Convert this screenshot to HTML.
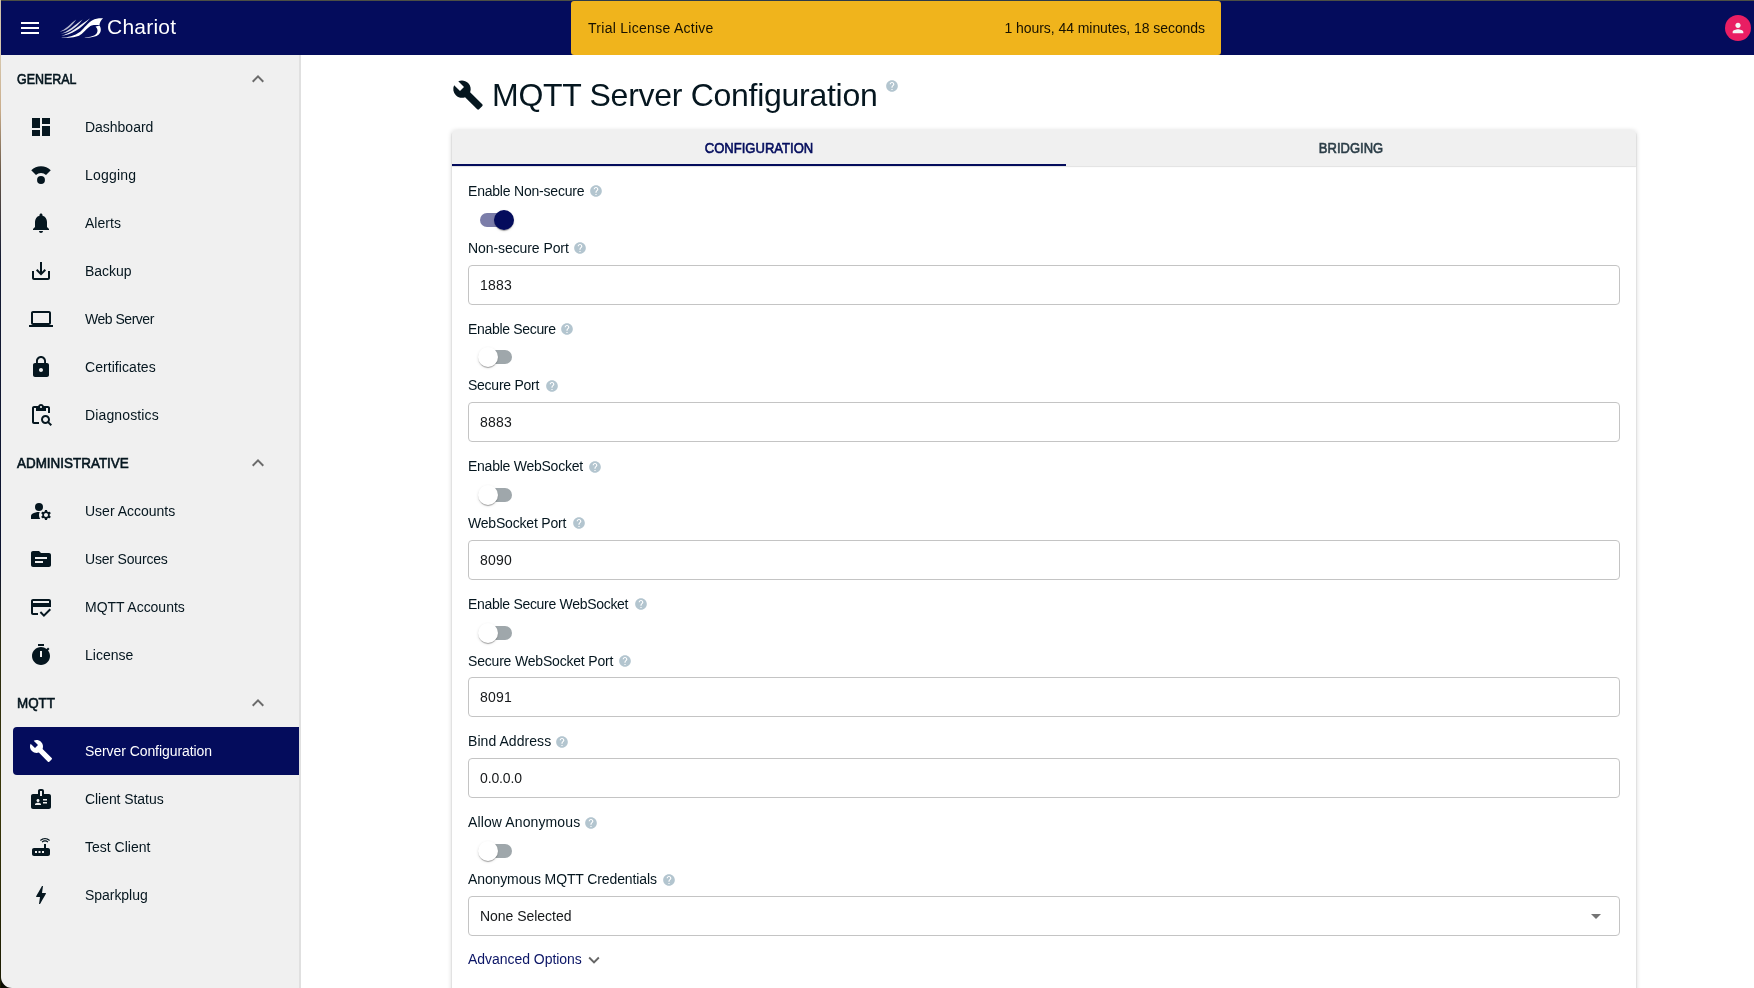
<!DOCTYPE html>
<html lang="en">
<head>
<meta charset="utf-8">
<title>Chariot - MQTT Server Configuration</title>
<style>
*{box-sizing:border-box;margin:0;padding:0}
html,body{width:1754px;height:988px;overflow:hidden;background:#fff}
body{font-family:"Liberation Sans",sans-serif;font-size:14px;color:#05161f;position:relative}
#app{position:absolute;left:0;top:0;width:1754px;height:988px;overflow:hidden;will-change:transform}
.abs{position:absolute}
svg{display:block}
/* window edges */
#topline{left:0;top:0;width:1754px;height:1px;background:linear-gradient(90deg,#4d4f44 0,#4d4f44 571px,#2d3b4b 574px,#2d3b4b 1218px,#4d4f44 1221px,#4d4f44 100%)}
#corner{left:0;top:974px;width:14px;height:14px;background:#0b0b03}
#leftline{left:0;top:0;width:1px;height:988px;background:linear-gradient(#cdbfa7 0,#d7c8ae 55px,#c9ad8b 110px,#6b5a49 170px,#141b33 260px,#0c1330 560px,#2a2a10 640px,#3a3708 800px,#1a1a02 988px)}
/* header */
#hdr{left:1px;top:1px;width:1753px;height:54px;background:#040c5c}
#banner{left:571px;top:1px;width:650px;height:54px;background:#f0b41c;border-radius:3px;color:#171100}
#brand{left:106px;top:12px;height:28px;line-height:28px;font-size:21px;color:#fff;white-space:nowrap;letter-spacing:.22px}
/* sidebar */
#side{left:1px;top:55px;width:300px;height:933px;background:#f0f0f0;border-right:2px solid #e0e0e0;border-bottom-left-radius:11px}
.row{position:absolute;left:0;width:298px;height:48px}
.row .t{position:absolute;left:84px;top:14px;height:20px;line-height:20px;white-space:nowrap;font-size:14px}
.row .i{position:absolute;left:28px;top:12px;width:24px;height:24px;fill:#05161f}
.sec .t{left:16px;font-size:14px;-webkit-text-stroke:.6px #05161f;transform-origin:0 50%}
.sec .c{position:absolute;left:245px;top:12px;width:24px;height:24px;fill:#6b6b6b}
.row.sel{left:12px;width:286px;background:#040c5c;border-radius:4px 0 0 4px;color:#fff}
.row.sel .t{left:72px}
.row.sel .i{left:16px;fill:#fff}
/* main */
#title{left:492px;top:75px;height:40px;line-height:40px;font-size:32px;white-space:nowrap;letter-spacing:-.28px}
#card{left:452px;top:130px;width:1184px;height:900px;background:#fff;border-radius:4px;box-shadow:0 3px 1px -2px rgba(0,0,0,.2),0 2px 2px 0 rgba(0,0,0,.14),0 1px 5px 0 rgba(0,0,0,.2)}
#tabs{left:0;top:0;width:1184px;height:36px;background:#f0f0f0;border-radius:4px 4px 0 0;box-shadow:0 1px 1px rgba(0,0,0,.12)}
.tab{position:absolute;top:0;height:36px;line-height:36px;text-align:center;font-size:14px;white-space:nowrap}
.lbl{position:absolute;left:16px;height:20px;line-height:20px;font-size:14px;white-space:nowrap}
.hp{position:absolute;width:14px;height:14px;fill:#b3c5cf}
.inp{position:absolute;left:16px;width:1152px;height:40px;border:1px solid #c4c4c4;border-radius:4px;background:#fff;padding-left:11px;line-height:38px;font-size:14px;color:#16181a;white-space:nowrap}
.sw{position:absolute;left:28px;width:32px;height:14px;border-radius:7px;background:#9fa7ab}
.sw i{position:absolute;left:-2px;top:-3px;width:20px;height:20px;border-radius:50%;background:#fff;box-shadow:0 2px 1px -1px rgba(0,0,0,.2),0 1px 1px 0 rgba(0,0,0,.14),0 1px 3px 0 rgba(0,0,0,.12)}
.sw.on{background:#7b7da9}
.sw.on i{left:14px;background:#040c5c}
</style>
</head>
<body>
<div id="app">
  <div id="corner" class="abs"></div>
  <div id="hdr" class="abs">
    <svg class="abs" style="left:17px;top:15px" width="24" height="24" viewBox="0 0 24 24" fill="#fff"><path d="M3 18h18v-2H3v2zm0-5h18v-2H3v2zm0-7v2h18V6H3z"/></svg>
    <svg class="abs" style="left:55px;top:13px" width="50" height="28" viewBox="0 0 1754 982" fill="#fff"><defs><filter id="lb" x="-10%" y="-10%" width="120%" height="120%"><feGaussianBlur stdDeviation="9"/></filter></defs>
      <path opacity=".95" filter="url(#lb)" d="M180 765C502 696 784 432 1200 150C856 528 538 744 180 765Z"/>
      <path opacity=".85" filter="url(#lb)" d="M150 692C413 628 646 395 930 190C714 485 447 672 150 692Z"/>
      <path opacity=".7" filter="url(#lb)" d="M125 622C324 559 488 358 710 195C552 442 356 601 125 622Z"/>
      <path d="M200 828C420 822 640 770 850 620C1000 500 1100 300 1350 185C1450 150 1560 150 1650 150C1580 220 1530 300 1525 392C1450 378 1330 378 1250 400C1130 440 1030 590 900 700C780 800 560 850 200 832Z"/>
      <path d="M1385 445C1440 425 1500 418 1535 415C1590 520 1590 640 1500 720C1400 810 1200 840 920 826C1150 815 1300 790 1390 720C1480 640 1480 520 1385 445Z"/>
    </svg>
    <div class="abs" id="brand">Chariot</div>
    <div id="banner" class="abs" style="left:570px;top:0">
      <span class="abs" style="left:17px;top:17px;line-height:20px;white-space:nowrap;letter-spacing:.28px">Trial License Active</span>
      <span class="abs" style="right:16px;top:17px;line-height:20px;white-space:nowrap;letter-spacing:-.06px">1 hours, 44 minutes, 18 seconds</span>
    </div>
    <div class="abs" style="left:1724px;top:14px;width:26px;height:26px;border-radius:50%;background:#e91e63">
      <svg class="abs" style="left:5px;top:5px" width="16" height="16" viewBox="0 0 24 24" fill="#f5f5f5"><path d="M12 12c2.210 0 4-1.790 4-4s-1.790-4-4-4-4 1.790-4 4 1.790 4 4 4zm0 2c-2.670 0-8 1.340-8 4v2h16v-2c0-2.660-5.330-4-8-4z"/></svg>
    </div>
  </div>
  <!--SIDE--><div id="side" class="abs">
    <div class="row sec" style="top:0px"><span class="t" style="transform:scaleX(0.889)">GENERAL</span><svg class="c" viewBox="0 0 24 24"><path d="M12 8l-6 6 1.410 1.410L12 10.830l4.590 4.580L18 14z"/></svg></div>
    <div class="row" style="top:48px"><svg class="i" viewBox="0 0 24 24"><path d="M3 13h8V3H3v10zm0 8h8v-6H3v6zm10 0h8V11h-8v10zm0-18v6h8V3h-8z"/></svg><span class="t" style="letter-spacing:-0.02px">Dashboard</span></div>
    <div class="row" style="top:96px"><svg class="i" viewBox="0 0 24 24"><circle cx="12" cy="16.95" r="3.95"/><path d="M2.240 7.240A13.800 13.800 0 0 1 21.760 7.240L17.020 11.980A7.100 7.100 0 0 0 6.980 11.980Z"/></svg><span class="t" style="letter-spacing:0.21px">Logging</span></div>
    <div class="row" style="top:144px"><svg class="i" viewBox="0 0 24 24"><path d="M12 22c1.100 0 2-.9 2-2h-4c0 1.100.89 2 2 2zm6-6v-5c0-3.070-1.640-5.640-4.500-6.320V4c0-.83-.67-1.500-1.500-1.500s-1.500.67-1.500 1.500v.68C7.630 5.360 6 7.920 6 11v5l-2 2v1h16v-1l-2-2z"/></svg><span class="t" style="letter-spacing:0.02px">Alerts</span></div>
    <div class="row" style="top:192px"><svg class="i" viewBox="0 0 24 24"><path d="M19 12v7H5v-7H3v7c0 1.100.9 2 2 2h14c1.100 0 2-.9 2-2v-7h-2zm-6 .67l2.590-2.580L17 11.500l-5 5-5-5 1.410-1.410L11 12.670V3h2z"/></svg><span class="t" style="letter-spacing:-0.02px">Backup</span></div>
    <div class="row" style="top:240px"><svg class="i" viewBox="0 0 24 24"><path d="M20 18c1.100 0 1.990-.9 1.990-2L22 6c0-1.100-.9-2-2-2H4c-1.100 0-2 .9-2 2v10c0 1.100.9 2 2 2H0v2h24v-2h-4zM4 6h16v10H4V6z"/></svg><span class="t" style="letter-spacing:-0.48px">Web Server</span></div>
    <div class="row" style="top:288px"><svg class="i" viewBox="0 0 24 24"><path d="M18 8h-1V6c0-2.760-2.240-5-5-5S7 3.240 7 6v2H6c-1.100 0-2 .9-2 2v10c0 1.100.9 2 2 2h12c1.100 0 2-.9 2-2V10c0-1.100-.9-2-2-2zm-6 9c-1.100 0-2-.9-2-2s.9-2 2-2 2 .9 2 2-.9 2-2 2zm3.100-9H8.900V6c0-1.710 1.390-3.100 3.100-3.100 1.710 0 3.100 1.390 3.100 3.100v2z"/></svg><span class="t" style="letter-spacing:0.06px">Certificates</span></div>
    <div class="row" style="top:336px"><svg class="i" viewBox="0 0 24 24"><path d="M5 5h2v3h10V5h2v5h2V5c0-1.100-.9-2-2-2h-4.180C14.400 1.840 13.300 1 12 1s-2.400.84-2.820 2H5c-1.100 0-2 .9-2 2v14c0 1.100.9 2 2 2h5v-2H5V5zm7-2c.55 0 1 .45 1 1s-.45 1-1 1-1-.45-1-1 .45-1 1-1z"/><path d="M20.300 18.900c.4-.7.7-1.500.7-2.400 0-2.500-2-4.500-4.500-4.500S12 14 12 16.500s2 4.500 4.500 4.500c.9 0 1.700-.3 2.400-.7l2.700 2.700 1.400-1.400-2.700-2.700zm-3.800.1c-1.400 0-2.500-1.100-2.500-2.500s1.100-2.500 2.500-2.500 2.500 1.100 2.500 2.500-1.100 2.500-2.500 2.500z"/></svg><span class="t" style="letter-spacing:0.13px">Diagnostics</span></div>
    <div class="row sec" style="top:384px"><span class="t" style="transform:scaleX(0.96)">ADMINISTRATIVE</span><svg class="c" viewBox="0 0 24 24"><path d="M12 8l-6 6 1.410 1.410L12 10.830l4.590 4.580L18 14z"/></svg></div>
    <div class="row" style="top:432px"><svg class="i" viewBox="0 0 24 24"><circle cx="10" cy="8" r="4"/><path d="M10.670 13.020c-.22-.01-.44-.02-.67-.02-2.420 0-4.680.67-6.610 1.820-.88.52-1.390 1.500-1.390 2.530V20h9.260c-.79-1.130-1.260-2.510-1.260-4 0-1.070.25-2.070.67-2.980zM20.750 16c0-.22-.03-.42-.06-.63l1.140-1.010-1-1.730-1.450.49c-.32-.27-.68-.48-1.080-.63L18 11h-2l-.3 1.490c-.4.15-.76.36-1.080.63l-1.450-.49-1 1.730 1.140 1.010c-.03.21-.06.41-.06.63s.03.420.06.630l-1.140 1.010 1 1.730 1.450-.49c.32.27.68.480 1.080.630L16 21h2l.3-1.490c.4-.15.76-.36 1.080-.63l1.450.49 1-1.730-1.140-1.010c.03-.21.06-.41.06-.63zM17 18c-1.100 0-2-.9-2-2s.9-2 2-2 2 .9 2 2-.9 2-2 2z"/></svg><span class="t" style="letter-spacing:0px">User Accounts</span></div>
    <div class="row" style="top:480px"><svg class="i" viewBox="0 0 24 24"><path d="M20 6h-8l-2-2H4c-1.100 0-1.990.9-1.990 2L2 18c0 1.100.9 2 2 2h16c1.100 0 2-.9 2-2V8c0-1.100-.9-2-2-2zm-6 10H6v-2h8v2zm4-4H6v-2h12v2z"/></svg><span class="t" style="letter-spacing:-0.18px">User Sources</span></div>
    <div class="row" style="top:528px"><svg class="i" viewBox="0 0 24 24"><path d="M20 4H4c-1.110 0-1.990.89-1.990 2L2 18c0 1.110.89 2 2 2h5v-2H4v-6h18V6c0-1.110-.89-2-2-2zm0 4H4V6h16v2zm-5.070 11.170l-2.830-2.830-1.410 1.410L14.930 22 22 14.930l-1.410-1.410-5.660 5.650z"/></svg><span class="t" style="letter-spacing:-0.03px">MQTT Accounts</span></div>
    <div class="row" style="top:576px"><svg class="i" viewBox="0 0 24 24"><path d="M9 1h6v2H9zm10.030 6.390l1.420-1.420c-.43-.51-.9-.99-1.410-1.410l-1.420 1.420C16.070 4.740 14.120 4 12 4c-4.970 0-9 4.030-9 9s4.020 9 9 9 9-4.030 9-9c0-2.120-.74-4.070-1.970-5.610zM13 14h-2V8h2v6z"/></svg><span class="t" style="letter-spacing:0.02px">License</span></div>
    <div class="row sec" style="top:624px"><span class="t" style="transform:scaleX(0.957)">MQTT</span><svg class="c" viewBox="0 0 24 24"><path d="M12 8l-6 6 1.410 1.410L12 10.830l4.590 4.580L18 14z"/></svg></div>
    <div class="row sel" style="top:672px"><svg class="i" viewBox="0 0 24 24"><path d="M22.700 19l-9.100-9.100c.9-2.300.4-5-1.500-6.900-2-2-5-2.400-7.400-1.300L9 6 6 9 1.600 4.700C.4 7.100.9 10.100 2.900 12.100c1.900 1.900 4.600 2.400 6.900 1.500l9.100 9.100c.4.400 1 .4 1.400 0l2.300-2.300c.5-.4.5-1.100.1-1.400z"/></svg><span class="t" style="letter-spacing:-0.07px">Server Configuration</span></div>
    <div class="row" style="top:720px"><svg class="i" viewBox="0 0 24 24"><path d="M20 7h-5V4c0-1.100-.9-2-2-2h-2c-1.100 0-2 .9-2 2v3H4c-1.100 0-2 .9-2 2v11c0 1.100.9 2 2 2h16c1.100 0 2-.9 2-2V9c0-1.100-.9-2-2-2zM9 12c.83 0 1.500.67 1.500 1.500S9.830 15 9 15s-1.500-.67-1.500-1.500S8.170 12 9 12zm3 6H6v-.75c0-1 2-1.500 3-1.500s3 .5 3 1.500V18zm1-9h-2V4h2v5zm5 7.500h-4V15h4v1.500zm0-3h-4V12h4v1.500z"/></svg><span class="t" style="letter-spacing:-0.06px">Client Status</span></div>
    <div class="row" style="top:768px"><svg class="i" viewBox="0 0 24 24"><path d="M20.200 5.900l.8-.8C19.600 3.700 17.800 3 16 3s-3.600.7-5 2.100l.8.800C13 4.800 14.500 4.200 16 4.200s3 .6 4.200 1.700zm-.9.800c-.9-.9-2.100-1.400-3.300-1.400s-2.400.5-3.300 1.400l.8.800c.7-.7 1.600-1 2.500-1 .9 0 1.800.3 2.500 1l.8-.8zM19 13h-2V9h-2v4H5c-1.100 0-2 .9-2 2v4c0 1.100.9 2 2 2h14c1.100 0 2-.9 2-2v-4c0-1.100-.9-2-2-2zM8 18H6v-2h2v2zm3.500 0h-2v-2h2v2zm3.500 0h-2v-2h2v2z"/></svg><span class="t" style="letter-spacing:0px">Test Client</span></div>
    <div class="row" style="top:816px"><svg class="i" viewBox="0 0 24 24"><path d="M11 21h-1l1-7H7.500c-.58 0-.57-.32-.38-.66.19-.34.05-.08.07-.12C8.480 10.940 10.420 7.540 13 3h1l-1 7h3.500c.49 0 .56.33.47.51l-.07.15C12.960 17.550 11 21 11 21z"/></svg><span class="t" style="letter-spacing:-0.04px">Sparkplug</span></div>
  </div><!--/SIDE-->
  <!--MAIN--><svg class="abs" style="left:452px;top:79px;fill:#05161f" width="32" height="32" viewBox="0 0 24 24"><path d="M22.700 19l-9.100-9.100c.9-2.300.4-5-1.500-6.900-2-2-5-2.400-7.400-1.300L9 6 6 9 1.600 4.700C.4 7.100.9 10.100 2.900 12.100c1.900 1.900 4.600 2.400 6.900 1.500l9.100 9.100c.4.400 1 .4 1.400 0l2.300-2.300c.5-.4.500-1.100.1-1.400z"/></svg>
  <div id="title" class="abs">MQTT Server Configuration</div>
  <svg class="hp" style="left:884.8px;top:79.4px" viewBox="0 0 24 24"><path d="M12 2C6.480 2 2 6.480 2 12s4.480 10 10 10 10-4.480 10-10S17.520 2 12 2zm1 17h-2v-2h2v2zm2.070-7.750l-.9.920C13.450 12.900 13 13.500 13 15h-2v-.5c0-1.100.45-2.100 1.170-2.830l1.240-1.260c.37-.36.590-.86.590-1.410 0-1.100-.9-2-2-2s-2 .9-2 2H8c0-2.210 1.790-4 4-4s4 1.790 4 4c0 .880-.36 1.680-.93 2.250z"/></svg>
  <div id="card" class="abs">
    <div id="tabs" class="abs">
      <div class="tab" style="left:0;width:614px;color:#050e5e;-webkit-text-stroke:.6px #050e5e;transform:scaleX(.932)">CONFIGURATION</div>
      <div class="tab" style="left:614px;width:570px;color:#2c3e48;-webkit-text-stroke:.6px #2c3e48;transform:scaleX(.929)">BRIDGING</div>
      <div class="abs" style="left:0;top:34px;width:614px;height:2px;background:#040c5c"></div>
    </div>
    <div class="lbl" style="top:51px;letter-spacing:-0.21px">Enable Non-secure</div>
    <svg class="hp" style="left:136.70px;top:53.90px" viewBox="0 0 24 24"><path d="M12 2C6.480 2 2 6.480 2 12s4.480 10 10 10 10-4.480 10-10S17.520 2 12 2zm1 17h-2v-2h2v2zm2.070-7.750l-.9.920C13.450 12.900 13 13.500 13 15h-2v-.5c0-1.100.45-2.100 1.170-2.830l1.240-1.260c.37-.36.590-.86.590-1.410 0-1.100-.9-2-2-2s-2 .9-2 2H8c0-2.210 1.790-4 4-4s4 1.790 4 4c0 .880-.36 1.680-.93 2.250z"/></svg>
    <div class="lbl" style="top:108px;letter-spacing:-0.08px">Non-secure Port</div>
    <svg class="hp" style="left:121.20px;top:111.10px" viewBox="0 0 24 24"><path d="M12 2C6.480 2 2 6.480 2 12s4.480 10 10 10 10-4.480 10-10S17.520 2 12 2zm1 17h-2v-2h2v2zm2.070-7.750l-.9.920C13.450 12.900 13 13.500 13 15h-2v-.5c0-1.100.45-2.100 1.170-2.830l1.240-1.260c.37-.36.590-.86.590-1.410 0-1.100-.9-2-2-2s-2 .9-2 2H8c0-2.210 1.790-4 4-4s4 1.790 4 4c0 .880-.36 1.680-.93 2.250z"/></svg>
    <div class="lbl" style="top:189px;letter-spacing:-0.32px">Enable Secure</div>
    <svg class="hp" style="left:108.25px;top:192.00px" viewBox="0 0 24 24"><path d="M12 2C6.480 2 2 6.480 2 12s4.480 10 10 10 10-4.480 10-10S17.520 2 12 2zm1 17h-2v-2h2v2zm2.070-7.750l-.9.920C13.450 12.900 13 13.500 13 15h-2v-.5c0-1.100.45-2.100 1.170-2.830l1.240-1.260c.37-.36.590-.86.590-1.410 0-1.100-.9-2-2-2s-2 .9-2 2H8c0-2.210 1.790-4 4-4s4 1.790 4 4c0 .880-.36 1.680-.93 2.250z"/></svg>
    <div class="lbl" style="top:245px;letter-spacing:-0.25px">Secure Port</div>
    <svg class="hp" style="left:92.80px;top:249.10px" viewBox="0 0 24 24"><path d="M12 2C6.480 2 2 6.480 2 12s4.480 10 10 10 10-4.480 10-10S17.520 2 12 2zm1 17h-2v-2h2v2zm2.070-7.750l-.9.920C13.450 12.900 13 13.500 13 15h-2v-.5c0-1.100.45-2.100 1.170-2.830l1.240-1.260c.37-.36.590-.86.590-1.410 0-1.100-.9-2-2-2s-2 .9-2 2H8c0-2.210 1.790-4 4-4s4 1.790 4 4c0 .880-.36 1.680-.93 2.250z"/></svg>
    <div class="lbl" style="top:326px;letter-spacing:-0.25px">Enable WebSocket</div>
    <svg class="hp" style="left:135.60px;top:329.90px" viewBox="0 0 24 24"><path d="M12 2C6.480 2 2 6.480 2 12s4.480 10 10 10 10-4.480 10-10S17.520 2 12 2zm1 17h-2v-2h2v2zm2.070-7.750l-.9.920C13.450 12.900 13 13.500 13 15h-2v-.5c0-1.100.45-2.100 1.170-2.830l1.240-1.260c.37-.36.590-.86.590-1.410 0-1.100-.9-2-2-2s-2 .9-2 2H8c0-2.210 1.790-4 4-4s4 1.790 4 4c0 .880-.36 1.680-.93 2.250z"/></svg>
    <div class="lbl" style="top:383px;letter-spacing:-0.19px">WebSocket Port</div>
    <svg class="hp" style="left:119.95px;top:386.20px" viewBox="0 0 24 24"><path d="M12 2C6.480 2 2 6.480 2 12s4.480 10 10 10 10-4.480 10-10S17.520 2 12 2zm1 17h-2v-2h2v2zm2.070-7.750l-.9.920C13.450 12.900 13 13.500 13 15h-2v-.5c0-1.100.45-2.100 1.170-2.830l1.240-1.260c.37-.36.590-.86.590-1.410 0-1.100-.9-2-2-2s-2 .9-2 2H8c0-2.210 1.790-4 4-4s4 1.790 4 4c0 .880-.36 1.680-.93 2.250z"/></svg>
    <div class="lbl" style="top:464px;letter-spacing:-0.3px">Enable Secure WebSocket</div>
    <svg class="hp" style="left:182.00px;top:467.40px" viewBox="0 0 24 24"><path d="M12 2C6.480 2 2 6.480 2 12s4.480 10 10 10 10-4.480 10-10S17.520 2 12 2zm1 17h-2v-2h2v2zm2.070-7.750l-.9.920C13.450 12.900 13 13.500 13 15h-2v-.5c0-1.100.45-2.100 1.170-2.830l1.240-1.260c.37-.36.590-.86.590-1.410 0-1.100-.9-2-2-2s-2 .9-2 2H8c0-2.210 1.790-4 4-4s4 1.790 4 4c0 .880-.36 1.680-.93 2.250z"/></svg>
    <div class="lbl" style="top:521px;letter-spacing:-0.19px">Secure WebSocket Port</div>
    <svg class="hp" style="left:166.30px;top:524.10px" viewBox="0 0 24 24"><path d="M12 2C6.480 2 2 6.480 2 12s4.480 10 10 10 10-4.480 10-10S17.520 2 12 2zm1 17h-2v-2h2v2zm2.070-7.750l-.9.920C13.450 12.900 13 13.500 13 15h-2v-.5c0-1.100.45-2.100 1.170-2.830l1.240-1.260c.37-.36.590-.86.590-1.410 0-1.100-.9-2-2-2s-2 .9-2 2H8c0-2.210 1.790-4 4-4s4 1.790 4 4c0 .880-.36 1.680-.93 2.250z"/></svg>
    <div class="lbl" style="top:601px;letter-spacing:0.06px">Bind Address</div>
    <svg class="hp" style="left:102.75px;top:605.00px" viewBox="0 0 24 24"><path d="M12 2C6.480 2 2 6.480 2 12s4.480 10 10 10 10-4.480 10-10S17.520 2 12 2zm1 17h-2v-2h2v2zm2.070-7.750l-.9.920C13.450 12.900 13 13.500 13 15h-2v-.5c0-1.100.45-2.100 1.170-2.830l1.240-1.260c.37-.36.590-.86.590-1.410 0-1.100-.9-2-2-2s-2 .9-2 2H8c0-2.210 1.790-4 4-4s4 1.790 4 4c0 .880-.36 1.680-.93 2.250z"/></svg>
    <div class="lbl" style="top:682px;letter-spacing:0.12px">Allow Anonymous</div>
    <svg class="hp" style="left:132.40px;top:686.20px" viewBox="0 0 24 24"><path d="M12 2C6.480 2 2 6.480 2 12s4.480 10 10 10 10-4.480 10-10S17.520 2 12 2zm1 17h-2v-2h2v2zm2.070-7.750l-.9.920C13.450 12.900 13 13.500 13 15h-2v-.5c0-1.100.45-2.100 1.170-2.830l1.240-1.260c.37-.36.590-.86.590-1.410 0-1.100-.9-2-2-2s-2 .9-2 2H8c0-2.210 1.790-4 4-4s4 1.790 4 4c0 .880-.36 1.680-.93 2.250z"/></svg>
    <div class="lbl" style="top:739px;letter-spacing:-0.12px">Anonymous MQTT Credentials</div>
    <svg class="hp" style="left:210.00px;top:742.50px" viewBox="0 0 24 24"><path d="M12 2C6.480 2 2 6.480 2 12s4.480 10 10 10 10-4.480 10-10S17.520 2 12 2zm1 17h-2v-2h2v2zm2.070-7.750l-.9.920C13.450 12.900 13 13.500 13 15h-2v-.5c0-1.100.45-2.100 1.170-2.830l1.240-1.260c.37-.36.590-.86.590-1.410 0-1.100-.9-2-2-2s-2 .9-2 2H8c0-2.210 1.790-4 4-4s4 1.790 4 4c0 .880-.36 1.680-.93 2.250z"/></svg>
    <div class="sw on" style="top:83px"><i></i></div>
    <div class="sw" style="top:220px"><i></i></div>
    <div class="sw" style="top:358px"><i></i></div>
    <div class="sw" style="top:496px"><i></i></div>
    <div class="sw" style="top:714px"><i></i></div>
    <div class="inp" style="top:135px;letter-spacing:0.21px">1883</div>
    <div class="inp" style="top:272px;letter-spacing:0.21px">8883</div>
    <div class="inp" style="top:410px;letter-spacing:0.21px">8090</div>
    <div class="inp" style="top:547px;letter-spacing:0.21px">8091</div>
    <div class="inp" style="top:628px;letter-spacing:-0.12px">0.0.0.0</div>
    <div class="inp" style="top:766px;letter-spacing:-0.03px">None Selected<svg class="abs" style="left:1115px;top:7px;fill:#757575" width="24" height="24" viewBox="0 0 24 24"><path d="M7 10l5 5 5-5z"/></svg></div>
    <div class="lbl" style="top:819px;letter-spacing:-.04px;color:#0b1566">Advanced Options</div>
    <svg class="abs" style="left:130.80px;top:818.5px;fill:#666" width="22" height="22" viewBox="0 0 24 24"><path d="M16.590 8.590L12 13.170 7.410 8.590 6 10l6 6 6-6z"/></svg>
  </div><!--/MAIN-->
  <div id="topline" class="abs"></div>
  <div id="leftline" class="abs"></div>
</div>
</body>
</html>
